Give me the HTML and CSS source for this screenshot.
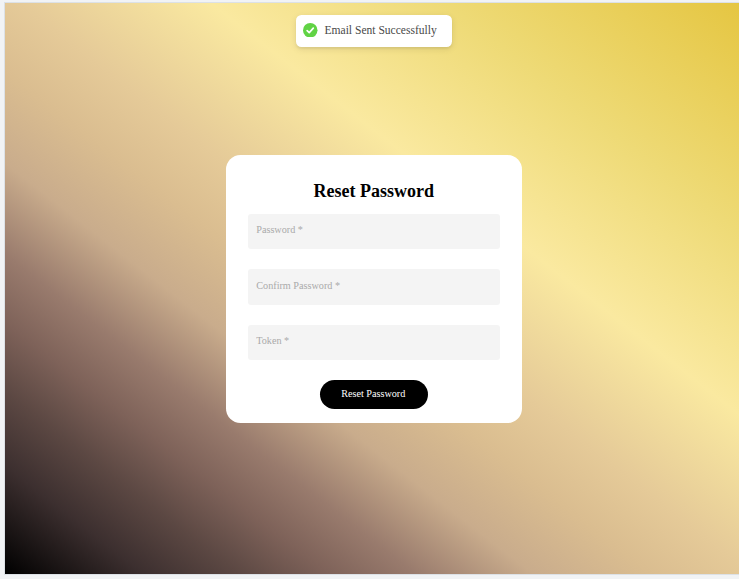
FILE: index.html
```html
<!DOCTYPE html>
<html lang="en">
<head>
<meta charset="utf-8">
<title>Reset Password</title>
<link rel="stylesheet" href="styles.css">
</head>
<body>
<main class="page">
  <div class="toast" role="status">
    <svg class="toast-icon" viewBox="0 0 20 20" aria-hidden="true"><circle cx="10" cy="10" r="10" fill="#61d345"/><path d="M5.7 10.4l2.9 2.8 5.6-6.2" fill="none" stroke="#fff" stroke-width="2.3" stroke-linecap="round" stroke-linejoin="round"/></svg>
    <span>Email Sent Successfully</span>
  </div>
  <form class="card">
    <h1 class="title">Reset Password</h1>
    <input class="field" type="password" placeholder="Password *">
    <input class="field" type="password" placeholder="Confirm Password *">
    <input class="field" type="text" placeholder="Token *">
    <button class="submit" type="button">Reset Password</button>
  </form>
</main>
</body>
</html>
```
FILE: styles.css
```css
* {
  box-sizing: border-box;
}

body {
  margin: 0;
  height: 579px;
  padding: 3px 0 5px 5px;
  background: #f1f3f5;
  font-family: "Liberation Serif", serif;
  overflow: hidden;
}

.page {
  position: relative;
  height: 571px;
  display: flex;
  justify-content: center;
  align-items: flex-start;
  padding: 151.5px 0 0 3.5px;
  box-shadow: 0 0 0 1px #dce1e6;
  background: linear-gradient(to top right, #000 0%, #3c2f2f 9.5%, #5c4843 16%, #7e6259 22%, #997b6d 28%, #c9ac8c 36%, #dabd90 44%, #e5ca98 51%, #fae9a0 64%, #eeda76 80%, #e5c642 100%);
}

.toast {
  position: absolute;
  top: 11.5px;
  left: 291px;
  width: 155.5px;
  height: 32px;
  display: flex;
  align-items: center;
  gap: 7px;
  padding: 0 0 1px 7px;
  border-radius: 5.5px;
  background: #fff;
  color: #484848;
  font-size: 11.55px;
  white-space: nowrap;
  box-shadow: 0 2px 7px rgba(0, 0, 0, .1), 0 2px 2px rgba(0, 0, 0, .05);
}

.toast-icon {
  width: 14.5px;
  height: 14.5px;
}

.card {
  width: 295.5px;
  height: 268.5px;
  display: flex;
  flex-direction: column;
  align-items: center;
  padding: 26px 21.5px 14px;
  border-radius: 14.5px;
  background: #fff;
}

.title {
  margin: 0 0 12px;
  font-size: 18px;
  line-height: 21px;
}

.field {
  width: 252px;
  height: 35.5px;
  flex: none;
  margin: 0 0 20px;
  padding: 0 8.5px 3px;
  border: 0;
  border-radius: 3px;
  background: #f4f4f4;
  font: 10.2px "Liberation Serif", serif;
}

.field::placeholder {
  color: #aaa;
}

.submit {
  width: 108px;
  height: 29px;
  flex: none;
  padding: 0 1px 2px 0;
  border: 0;
  border-radius: 15px;
  background: #000;
  color: #fff;
  font: 10.2px "Liberation Serif", serif;
}
```
